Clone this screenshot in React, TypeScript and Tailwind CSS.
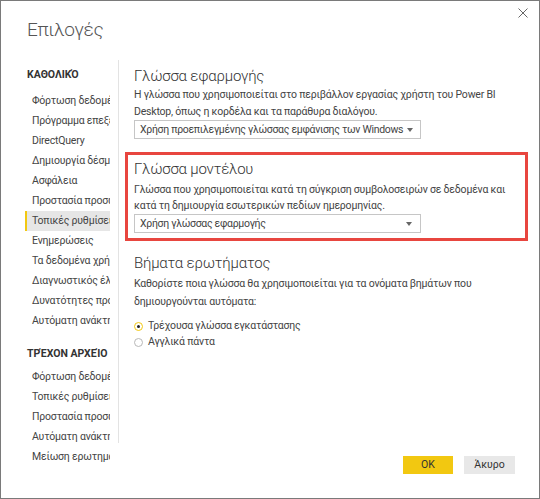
import React from "react";

const font = { fontFamily: 'Roboto, "Noto Sans", sans-serif' };

const general = [
  "Φόρτωση δεδομένων",
  "Πρόγραμμα επεξεργασίας",
  "DirectQuery",
  "Δημιουργία δέσμης ενεργειών",
  "Ασφάλεια",
  "Προστασία προσωπικών δεδομένων",
  "Τοπικές ρυθμίσεις",
  "Ενημερώσεις",
  "Τα δεδομένα χρήσης",
  "Διαγνωστικός έλεγχος",
  "Δυνατότητες προεπισκόπησης",
  "Αυτόματη ανάκτηση",
];

const current = [
  "Φόρτωση δεδομένων",
  "Τοπικές ρυθμίσεις",
  "Προστασία προσωπικών δεδομένων",
  "Αυτόματη ανάκτηση",
  "Μείωση ερωτημάτων",
];

function NavItem({ label, active }: { label: string; active?: boolean }) {
  return (
    <div
      className={
        "flex h-[20px] w-[85px] items-center overflow-hidden whitespace-nowrap text-[10.5px] tracking-[-0.2px] text-[#444] " +
        (active ? "border-l-[2px] border-[#f2c811] bg-[#e6e6e6] pl-[5px]" : "pl-[7px]")
      }
    >
      {label}
    </div>
  );
}

function Select({ label }: { label: string }) {
  return (
    <div className="flex h-[19px] w-[287px] items-center justify-between gap-[4px] border border-[#c6c6c6] bg-white pl-[5px] pr-[8px] text-[10.5px] tracking-[-0.3px] text-[#444]">
      <span className="whitespace-nowrap">{label}</span>
      <svg className="shrink-0" width="6" height="4" viewBox="0 0 6 4">
        <path d="M0 0 L6 0 L3 4 Z" fill="#666" />
      </svg>
    </div>
  );
}

function Radio({ label, checked }: { label: string; checked?: boolean }) {
  return (
    <div className="flex h-[16px] items-center gap-[5px] text-[10.5px] tracking-[-0.2px] text-[#444]">
      {checked ? (
        <span className="flex h-[9px] w-[9px] items-center justify-center rounded-full border-[1.5px] border-[#f2c811] bg-white">
          <span className="h-[3px] w-[3px] rounded-full bg-[#222]" />
        </span>
      ) : (
        <span className="h-[9px] w-[9px] rounded-full border border-[#b8b8b8] bg-white" />
      )}
      <span className="whitespace-nowrap">{label}</span>
    </div>
  );
}

export default function App() {
  return (
    <div
      style={font}
      className="relative flex h-[499px] w-[540px] flex-col border border-[#7a7a7a] bg-white"
    >
      <div className="h-[59px] pl-[26px] pt-[14px]">
        <div className="text-[19px] font-light leading-[30px] tracking-[-0.3px] text-[#555]">
          Επιλογές
        </div>
      </div>
      <svg
        className="absolute right-[11px] top-[7px]"
        width="10"
        height="10"
        viewBox="0 0 10 10"
      >
        <path d="M0.5 0.5 L9.5 9.5 M9.5 0.5 L0.5 9.5" stroke="#666" strokeWidth="1" />
      </svg>

      <div className="flex flex-1">
        <div className="h-[383px] w-[118px] shrink-0 border-r border-[#e3e3e3] pl-[24px] pt-[5px]">
          <div className="flex h-[20px] items-center pl-[2px] text-[10.5px] font-bold text-[#333]">
            ΚΑΘΟΛΙΚΌ
          </div>
          <div className="mt-[6px] flex flex-col">
            {general.map((g) => (
              <NavItem key={g} label={g} active={g === "Τοπικές ρυθμίσεις"} />
            ))}
          </div>
          <div className="mt-[13px] flex h-[20px] items-center pl-[2px] text-[10.5px] font-bold text-[#333]">
            ΤΡΈΧΟΝ ΑΡΧΕΊΟ
          </div>
          <div className="mt-[3px] flex flex-col">
            {current.map((g) => (
              <NavItem key={g} label={g} />
            ))}
          </div>
        </div>

        <div className="flex flex-1 flex-col pl-[15px]">
          <div className="mt-[6px] text-[15px] font-light leading-[20px] tracking-[-0.2px] text-[#333]">
            Γλώσσα εφαρμογής
          </div>
          <div className="text-[10.5px] leading-[17px] tracking-[-0.2px] text-[#444]">
            <div className="whitespace-nowrap">
              Η γλώσσα που χρησιμοποιείται στο περιβάλλον εργασίας χρήστη του Power BI
            </div>
            <div className="whitespace-nowrap">
              Desktop, όπως η κορδέλα και τα παράθυρα διαλόγου.
            </div>
          </div>
          <Select label="Χρήση προεπιλεγμένης γλώσσας εμφάνισης των Windows" />

          <div className="ml-[-9px] mt-[13px] w-[403px] border-[3px] border-[#e8463f] px-[6px] pb-[5px] pt-[4px]">
            <div className="text-[15px] font-light leading-[20px] tracking-[-0.2px] text-[#333]">
              Γλώσσα μοντέλου
            </div>
            <div className="mt-[3px] text-[10.5px] leading-[16px] tracking-[-0.2px] text-[#444]">
              <div className="whitespace-nowrap">
                Γλώσσα που χρησιμοποιείται κατά τη σύγκριση συμβολοσειρών σε δεδομένα και
              </div>
              <div className="whitespace-nowrap">
                κατά τη δημιουργία εσωτερικών πεδίων ημερομηνίας.
              </div>
            </div>
            <Select label="Χρήση γλώσσας εφαρμογής" />
          </div>

          <div className="mt-[12px] text-[15px] font-light leading-[20px] tracking-[-0.2px] text-[#333]">
            Βήματα ερωτήματος
          </div>
          <div className="mt-[2px] text-[10.5px] leading-[18px] tracking-[-0.2px] text-[#444]">
            <div className="whitespace-nowrap">
              Καθορίστε ποια γλώσσα θα χρησιμοποιείται για τα ονόματα βημάτων που
            </div>
            <div className="whitespace-nowrap">δημιουργούνται αυτόματα:</div>
          </div>
          <div className="mt-[7px] flex flex-col">
            <Radio label="Τρέχουσα γλώσσα εγκατάστασης" checked />
            <Radio label="Αγγλικά πάντα" />
          </div>

          <div className="mt-auto flex justify-end gap-[11px] pb-[24px] pr-[24px]">
            <button className="flex h-[18px] w-[50px] items-center justify-center bg-[#f2c811] text-[10.5px] text-[#333]">
              OK
            </button>
            <button className="flex h-[18px] w-[51px] items-center justify-center bg-[#e8e8e8] text-[10.5px] text-[#333]">
              Άκυρο
            </button>
          </div>
        </div>
      </div>
    </div>
  );
}
